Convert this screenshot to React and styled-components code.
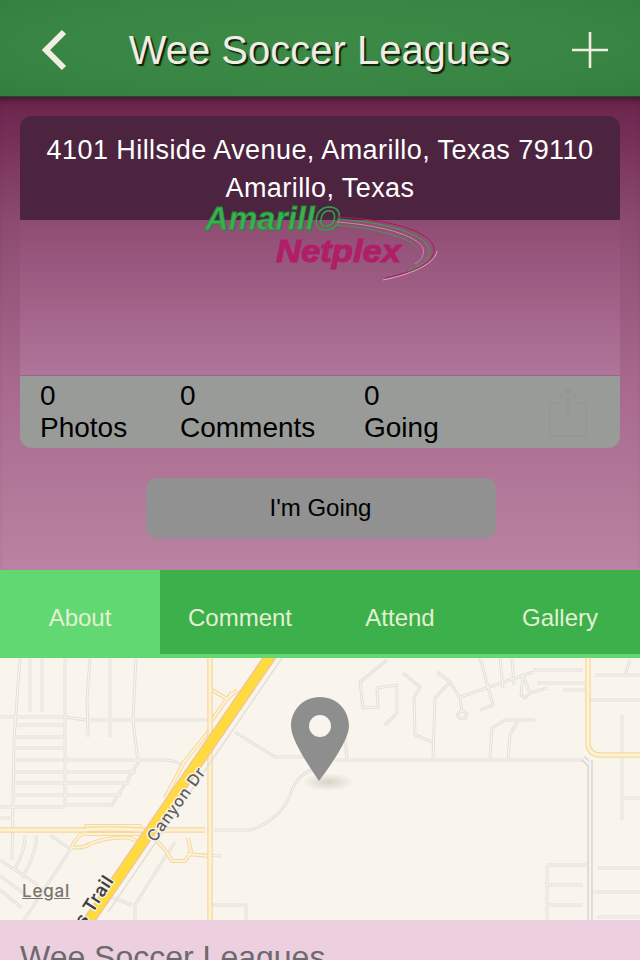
import React from "react";
import styled, { createGlobalStyle } from "styled-components";

const GlobalStyle = createGlobalStyle`
  html, body {
    margin: 0;
    padding: 0;
    background: #ecd0e0;
  }
  body {
    font-family: "Liberation Sans", Arial, sans-serif;
  }
`;

const stats = [
  { label: "Photos", width: 140 },
  { label: "Comments", width: 184 },
  { label: "Going", width: 160 },
];

const tabs = ["About", "Comment", "Attend", "Gallery"];

// map roads, in page coordinates (the map starts at y=658)
const streets = [
  "M20 658 L14 740 L12 860",
  "M30 658 V712",
  "M42 658 V712",
  "M65 658 V805",
  "M90 658 L87 700 L88 737",
  "M110 658 V737",
  "M136 658 L133 720 L138 763 L112 805 H65",
  "M0 717 H65 L85 720 H207",
  "M15 725 H65",
  "M15 737 H65",
  "M14 748 H65",
  "M14 760 H165 Q175 760 182 765",
  "M14 772 H136",
  "M13 783 H130",
  "M13 795 H122",
  "M0 807 H65",
  "M0 818 H14",
  "M72 847 L24 920",
  "M25 835 Q26 850 14 870",
  "M36 835 Q38 850 22 878",
  "M50 835 L72 850",
  "M0 860 L38 885",
  "M0 876 L30 898",
  "M0 890 L22 908",
  "M235 732 L275 757 H310",
  "M312 770 Q297 775 290 795 Q280 820 250 830 H214",
  "M175 842 Q160 865 135 905 V920",
  "M108 896 L132 905",
  "M187 854 L222 856",
  "M212 905 H246 V920",
  "M335 760 H585",
  "M387 660 L360 682 L363 708 L378 707 L377 688 L397 685 V713 L385 725",
  "M403 673 L420 687 L414 698 L415 735 L432 742",
  "M437 672 L450 682 L435 698 L433 758",
  "M450 682 L460 698 L462 712",
  "M457 715 L462 710 L467 714 L465 719 L459 718 Z",
  "M460 697 L533 672",
  "M480 658 L493 705 L480 710",
  "M500 658 L503 688",
  "M512 658 L514 685",
  "M533 670 H583",
  "M537 683 H585",
  "M563 690 H585",
  "M523 675 L530 693 L525 698 L521 695 Z",
  "M530 693 L547 688",
  "M490 758 L492 728 L505 720 H535",
  "M508 758 L510 735 L518 720",
  "M347 758 L345 738",
  "M595 675 H640",
  "M590 700 H640",
  "M625 675 L630 660",
  "M622 715 V820",
  "M622 798 H640",
  "M547 865 H587",
  "M547 865 V920",
  "M545 885 H583",
  "M548 905 H583",
  "M597 868 H640",
  "M592 892 H640",
  "M597 917 H640",
];

const arterials = ["M590 760 V920", "M583 758 L591 766"];

const mainRamps = [
  "M210 658 V920",
  "M0 830 H84 Q100 828 140 830 H205",
  "M588 658 V745 Q590 755 600 755 H640",
];

const ramps = [
  "M86 826 H140 V834 H86 Z",
  "M72 847 Q76 836 86 832",
  "M72 847 Q82 849 90 844 Q110 836 130 838 L142 843",
  "M150 835 Q164 846 172 861 H185 L191 852 L188 838",
  "M187 854 L210 856",
  "M212 690 L227 699 L237 690",
  "M212 720 L232 692",
  "M210 730 L184 762 L165 798",
  "M240 705 L214 740",
];

const Page = styled.div`
  display: flex;
  flex-direction: column;
  height: 960px;
  overflow: hidden;
`;

const Header = styled.header`
  display: flex;
  flex: 0 0 97px;
  align-items: center;
  justify-content: space-between;
  box-sizing: border-box;
  padding: 4px 32px 0 41px;
  background: radial-gradient(ellipse at 50% 45%, #3c8a46 0%, #398644 60%, #337e3e 100%);
  border-bottom: 1px solid #1f4a26;
  z-index: 1;
`;

const Title = styled.h1`
  margin: 0;
  font-size: 40px;
  line-height: 44px;
  font-weight: 400;
  color: #f0ede2;
  text-shadow: 2px 2px 1px #10200f;
`;

const Hero = styled.section`
  display: flex;
  flex: 0 0 473px;
  flex-direction: column;
  align-items: center;
  box-sizing: border-box;
  padding: 19px 20px 0;
  background: linear-gradient(180deg, #6b234c 0%, #8c4a70 26%, #a86a8d 62%, #ba83a2 100%);
  box-shadow: inset 0 7px 7px -5px rgba(30, 0, 20, 0.55);
`;

const Card = styled.div`
  position: relative;
  width: 600px;
  height: 332px;
  border-radius: 12px;
  overflow: hidden;
  display: flex;
  flex-direction: column;
`;

const Address = styled.div`
  flex: 0 0 104px;
  box-sizing: border-box;
  padding-top: 15px;
  background: #4c243f;
  color: #fff;
  font-size: 27px;
  line-height: 38px;
  letter-spacing: 0.43px;
  text-align: center;
`;

const Photo = styled.div`
  flex: 1;
  background: linear-gradient(180deg, #8f4c73 0%, #b0759a 100%);
  border-bottom: 1px solid #8f6a80;
`;

const Logo = styled.svg`
  position: absolute;
  left: 183px;
  top: 85px;
`;

const Stats = styled.div`
  flex: 0 0 72px;
  display: flex;
  align-items: flex-start;
  box-sizing: border-box;
  padding: 4px 0 0 20px;
  background: #999b99;
`;

const Stat = styled.div`
  width: ${(p) => p.$width}px;
  color: #000;
  font-size: 28px;
  line-height: 32px;
`;

const ShareIcon = styled.svg`
  margin: 7px 33px 0 auto;
`;

const GoingButton = styled.button`
  width: 350px;
  height: 60px;
  margin: 30px 0 0 1px;
  border: 0;
  border-radius: 10px;
  background: #909190;
  color: #000;
  font-family: inherit;
  font-size: 24px;
`;

const TabBar = styled.nav`
  display: flex;
  flex: 0 0 88px;
  box-sizing: border-box;
  background: #3bb04b;
  border-bottom: 4px solid #62d873;
`;

const Tab = styled.div`
  flex: 1;
  padding-top: 33px;
  background: ${(p) => (p.$active ? "#62d873" : "transparent")};
  margin-bottom: ${(p) => (p.$active ? "-4px" : "0")};
  color: #e4efd2;
  font-size: 24px;
  line-height: 30px;
  text-align: center;
`;

const MapArea = styled.div`
  position: relative;
  flex: 0 0 262px;
  background: #f9f5ec;
  overflow: hidden;
`;

const MapSvg = styled.svg`
  display: block;
`;

const Legal = styled.span`
  position: absolute;
  left: 22px;
  top: 223px;
  color: #77746f;
  font-family: "Inter", "Liberation Sans", sans-serif;
  font-size: 17px;
  font-weight: 500;
  letter-spacing: 0.8px;
  text-decoration: underline;
`;

const Pin = styled.svg`
  position: absolute;
  left: 280px;
  top: 36px;
`;

const Footer = styled.footer`
  flex: 1;
  box-sizing: border-box;
  padding: 19px 20px 0;
  background: #ecd0e0;
  color: #6c6a6d;
  font-size: 32px;
  line-height: 36px;
`;

const RoadSet = ({ paths, outer, inner, outerWidth, innerWidth }) => (
  <>
    {paths.map((d) => (
      <path key={d} d={d} fill="none" stroke={outer} strokeWidth={outerWidth} strokeLinejoin="round" />
    ))}
    {paths.map((d) => (
      <path key={d + "i"} d={d} fill="none" stroke={inner} strokeWidth={innerWidth} strokeLinejoin="round" />
    ))}
  </>
);

const App = () => {
  return (
    <Page>
      <GlobalStyle />
      <Header>
        <svg width="26" height="42" viewBox="0 0 26 42">
          <path d="M23 3 L5 21 L23 39" fill="none" stroke="#f0ede2" strokeWidth="6" />
        </svg>
        <Title>Wee Soccer Leagues</Title>
        <svg width="36" height="36" viewBox="0 0 36 36">
          <path d="M18 0 V36 M0 18 H36" fill="none" stroke="#f0ede2" strokeWidth="2.6" />
        </svg>
      </Header>
      <Hero>
        <Card>
          <Address>
            4101 Hillside Avenue, Amarillo, Texas 79110
            <br />
            Amarillo, Texas
          </Address>
          <Photo />
          <Stats>
            {stats.map((s) => (
              <Stat key={s.label} $width={s.width}>
                0
                <br />
                {s.label}
              </Stat>
            ))}
            <ShareIcon width="38" height="50" viewBox="0 0 38 50">
              <path
                d="M11 16 H1 V49 H37 V16 H27 M19 34 V2 M10 11 L19 2 L28 11"
                fill="none"
                stroke="#949694"
                strokeWidth="1.5"
              />
            </ShareIcon>
          </Stats>
          <Logo width="240" height="80" viewBox="0 0 240 80">
            <g fontFamily="Liberation Sans, Arial, sans-serif" fontStyle="italic" fontWeight="700">
              <text x="2" y="29" fontSize="34" fill="#3cb050" stroke="#1c8a3a" strokeWidth="0.8" textLength="135" lengthAdjust="spacingAndGlyphs">
                Amarill<tspan fill="none" stroke="#2f9e46" strokeWidth="1.6">O</tspan>
              </text>
              <text x="73" y="61" fontSize="31" fill="#b01e68" stroke="#b01e68" strokeWidth="1" textLength="125" lengthAdjust="spacingAndGlyphs">
                Netplex
              </text>
            </g>
            <path d="M134 16 C185 18 228 30 231 47 C233 60 215 70 182 77" fill="none" stroke="#a8195f" strokeWidth="1" />
            <path d="M134 18 C180 21 220 32 226 47 C229 57 220 64 205 70" fill="none" stroke="#3aa84a" strokeWidth="1" />
            <path d="M134 21 C176 24 214 34 220 47 C222 55 217 60 212 63" fill="none" stroke="#c58aa8" strokeWidth="1" />
            <path d="M134 24 C170 27 207 36 214 47" fill="none" stroke="#3aa84a" strokeWidth="0.8" />
            <path d="M234 50 C232 64 205 74 180 79" fill="none" stroke="#d8a8c4" strokeWidth="1" />
          </Logo>
        </Card>
        <GoingButton>I'm Going</GoingButton>
      </Hero>
      <TabBar>
        {tabs.map((t, i) => (
          <Tab key={t} $active={i === 0}>
            {t}
          </Tab>
        ))}
      </TabBar>
      <MapArea>
        <MapSvg width="640" height="262" viewBox="0 658 640 262">
          <RoadSet paths={streets} outer="#e3e0da" inner="#f9f7f2" outerWidth={3} innerWidth={1} />
          <RoadSet paths={arterials} outer="#d9d6d1" inner="#f5f3ee" outerWidth={5.5} innerWidth={2.5} />
          <RoadSet paths={ramps} outer="#f6d6a6" inner="#fdf4cf" outerWidth={4} innerWidth={2} />
          <RoadSet paths={mainRamps} outer="#f6d6a6" inner="#fdf4cf" outerWidth={5.5} innerWidth={3} />
          <path d="M272 654 L88 922" fill="none" stroke="#f5c98e" strokeWidth="12" />
          <path d="M272 654 L88 922" fill="none" stroke="#ffdb3e" strokeWidth="8.5" />
          <path d="M282 658 L108 912" fill="none" stroke="#e3e0da" strokeWidth="1.5" />
          <text
            transform="translate(155 843) rotate(-54)"
            fontFamily="Inter, Liberation Sans, sans-serif"
            fontSize="16"
            fontWeight="500"
            letterSpacing="0.8"
            fill="#5d5d62"
            stroke="#f9f5ec"
            strokeWidth="2.5"
            paintOrder="stroke"
          >
            Canyon Dr
          </text>
          <text
            transform="translate(84 927) rotate(-57)"
            fontFamily="Inter, Liberation Sans, sans-serif"
            fontSize="18"
            fontWeight="600"
            letterSpacing="0.5"
            fill="#3f3f44"
            stroke="#f9f5ec"
            strokeWidth="2.5"
            paintOrder="stroke"
          >
            s Trail
          </text>
        </MapSvg>
        <Legal>Legal</Legal>
        <Pin width="80" height="100" viewBox="0 0 80 100">
          <defs>
            <radialGradient id="pinShadow">
              <stop offset="0%" stopColor="#000" stopOpacity="0.14" />
              <stop offset="100%" stopColor="#000" stopOpacity="0" />
            </radialGradient>
          </defs>
          <ellipse cx="48" cy="88" rx="26" ry="9" fill="url(#pinShadow)" />
          <path
            fillRule="evenodd"
            fill="#8e8e8e"
            d="M40 3 C22 3 11 17 11 32 C11 46 29 72 39 87 C50 72 69 46 69 32 C69 17 58 3 40 3 Z M40 21 A11 11 0 1 1 40 43 A11 11 0 1 1 40 21 Z"
          />
        </Pin>
      </MapArea>
      <Footer>Wee Soccer Leagues</Footer>
    </Page>
  );
};

export default App;
